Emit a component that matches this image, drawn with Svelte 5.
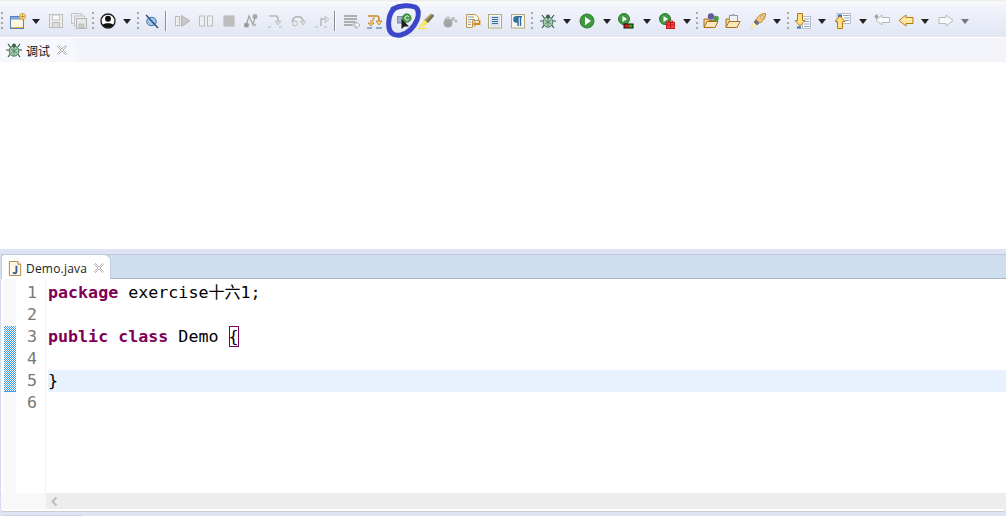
<script>
  const g = '#b9b9b9';
  const icons = {
    newfile: `<rect x="0.5" y="3.5" width="13" height="12" fill="#fdf6dc" stroke="#5b83b5"/><rect x="1" y="4" width="12" height="2.5" fill="#7fa6d6"/><path d="M1 14.5h12" stroke="#e0b050"/><circle cx="12.5" cy="3.5" r="3" fill="#ffe9a0" stroke="#c99a2e"/><path d="M12.5 1.5v4M10.5 3.5h4" stroke="#c98a1e"/>`,
    save: `<rect x="1.5" y="1.5" width="13" height="13" fill="#eee" stroke="#bbb"/><rect x="4.5" y="2" width="7" height="5" fill="#fafafa" stroke="#c4c4c4"/><rect x="4.5" y="9.5" width="7" height="5" fill="#ddd" stroke="#bbb"/>`,
    saveall: `<rect x="0.5" y="0.5" width="10" height="10" fill="#eee" stroke="#c4c4c4"/><rect x="3.5" y="3" width="10" height="10" fill="#eee" stroke="#c4c4c4"/><rect x="5.5" y="5.5" width="10" height="10" fill="#e8e8e8" stroke="#b4b4b4"/><rect x="8" y="11" width="5" height="4" fill="#ccc" stroke="#b4b4b4" stroke-width=".7"/>`,
    user: `<circle cx="8" cy="8" r="7" fill="#fff" stroke="#222" stroke-width="1.4"/><circle cx="8" cy="5.8" r="3" fill="#111"/><path d="M2.6 12.2C3.6 9.6 12.4 9.6 13.4 12.2 11 15.4 5 15.4 2.6 12.2Z" fill="#111"/>`,
    skip: `<ellipse cx="7.5" cy="8.5" rx="4.8" ry="4.2" fill="#a9c6e2" stroke="#3e6ea3"/><path d="M2 2 14 15" stroke="#1f4d84" stroke-width="1.4"/>`,
    resume: `<rect x="0.5" y="3.5" width="4" height="9" fill="#eee" stroke="#bbb"/><path d="M6.5 2.5 15 8l-8.5 5.5Z" fill="#c8c8c8" stroke="#b4b4b4"/>`,
    suspend: `<rect x="1.5" y="3" width="5" height="10" fill="#f0f0f0" stroke="#bbb"/><rect x="9.5" y="3" width="5" height="10" fill="#f0f0f0" stroke="#bbb"/>`,
    stop: `<rect x="2.5" y="2.5" width="11" height="11" rx="1" fill="#bdbdbd" stroke="#cfcfcf"/>`,
    disc: `<circle cx="3.5" cy="12" r="2.5" fill="#999"/><circle cx="12" cy="3.5" r="2.5" fill="#aaa"/><circle cx="12" cy="12" r="1.2" fill="#bbb"/><path d="M3.5 11 6 3l4 9 2-8" fill="none" stroke="#a4a4a4" stroke-width="1.2"/>`,
    into: `<path d="M2 3h7c2 0 2 2 2 3v3" fill="none" stroke="${g}" stroke-width="1.6"/><path d="M8 8h6l-3 4Z" fill="#d8d8d8" stroke="${g}" stroke-width=".7"/><path d="M1 14h3M12 14h3" stroke="${g}" stroke-width="1.2"/>`,
    over: `<path d="M2.5 9C2 2 13 2 13 8" fill="none" stroke="${g}" stroke-width="1.7"/><path d="M10 8h6l-3 4Z" fill="#ddd" stroke="${g}" stroke-width=".7"/><circle cx="5" cy="10.5" r="2.4" fill="#eee" stroke="${g}"/>`,
    ret: `<path d="M7 13V6h5" fill="none" stroke="${g}" stroke-width="1.6"/><path d="M11 3l4 3.5-4 3.5Z" fill="#ddd" stroke="${g}" stroke-width=".7"/><path d="M1 14h3M10 14h3" stroke="${g}" stroke-width="1.2"/>`,
    filter: `<path d="M0 3h13M0 6h13M0 9h11M0 12h8" stroke="#999" stroke-width="1.5"/><path d="M9 11h3V8.5l4 3.500-4 3.500V13H9Z" fill="#fff" stroke="#aaa"/>`,
    drop: `<path d="M1 3h9c2 0 2 1 2 3v3" fill="none" stroke="#c98a1e" stroke-width="1.6"/><path d="M3 8h3V5h2" fill="none" stroke="#c98a1e"/><path d="M9 8h6l-3 4Z" fill="#fbdc8c" stroke="#b87a10" stroke-width=".8"/><path d="M1 10l3 3 3-3Z" fill="#fbdc8c" stroke="#b87a10" stroke-width=".8"/><path d="M0 15h5M9 15h6" stroke="#2c6ca8" stroke-width="1.2"/>`,
    sync: `<rect x="1.500" y="3.500" width="6.500" height="6.500" fill="#a3b1c4" stroke="#7d8ea6"/><path d="M5.500 5.500 V16 L8.500 13.500 H13 Z" fill="#1e1e1e"/><circle cx="10.800" cy="5" r="4.300" fill="#3f9c45" stroke="#246f2a" stroke-width=".6"/><path d="M12.800 3.800A2.100 2.100 0 1 0 12.800 6.300" fill="none" stroke="#fff" stroke-width="1"/>`,
    pen: `<path d="M13 0.500 16 3 10 10 6 7Z" fill="#a99a60"/><path d="M15 1l1 2-6 7-2-2Z" fill="#77735a"/><path d="M6 7l4 3-2.500 2.500L0 15.500Z" fill="#f8e860"/><path d="M0 15.500h9" stroke="#f0dc50" stroke-width="1.200"/>`,
    mark: `<circle cx="6" cy="10" r="4.500" fill="#a4a4a4"/><circle cx="11" cy="6" r="2" fill="#bbb"/><circle cx="14" cy="8" r="1.500" fill="#bbb"/><path d="M3 6.500C5 3 7 4 8 5" fill="none" stroke="#aaa"/>`,
    block: `<path d="M1.500 1.500h9l3 3v3h-6v7h-6Z" fill="#fff6dc" stroke="#b79a5a"/><path d="M3 4h6M3 6.500h7M3 9h3M3 11.500h3" stroke="#8aa2bd"/><path d="M14.500 7v4H9.500" fill="none" stroke="#d18c16" stroke-width="1.800"/><path d="M10 8.500v5L7.500 11Z" fill="#f2b93e" stroke="#b87a10" stroke-width=".5"/>`,
    list: `<rect x="1.500" y="1.500" width="13" height="13.500" fill="#f7f7f4" stroke="#b5a878"/><rect x="3" y="3" width="10" height="10.500" fill="#d7e2f0"/><path d="M5 4.500h6M5 6.500h6M5 8.500h6M5 10.500h6" stroke="#3a6ba4"/>`,
    para: `<rect x="1.500" y="1.500" width="13" height="13.500" fill="#f7f7f4" stroke="#b5a878"/><path d="M8 13V4M10.500 13V4M12 3.800H6.500a2.600 2.600 0 0 0 0 5.200H8" fill="none" stroke="#2f6a9e" stroke-width="1.400"/><path d="M6.500 4.500a2 2 0 0 0 0 4H8V4Z" fill="#2f6a9e"/>`,
    bug: `<path d="M2 2l3 4M14 2l-3 4M0 8h3M16 8h-3M2 15l3-4M14 15l-3-4" stroke="#2b5a3a" stroke-width="1.200"/><ellipse cx="8" cy="9" rx="4.800" ry="5.200" fill="#a9cfa5" stroke="#4a7a6a"/><path d="M8 4v10M5 7l6 4M11 7l-6 4" stroke="#587f85" stroke-width=".9"/><circle cx="8" cy="3.500" r="2" fill="#3f5f55"/>`,
    run: `<circle cx="8" cy="8" r="7" fill="#3f9a3f" stroke="#2b7a2f"/><path d="M6 3.800 12 8l-6 4.200Z" fill="#fff"/>`,
    cov: `<circle cx="6" cy="6" r="5.500" fill="#3f9a3f" stroke="#2b7a2f"/><path d="M4.500 3 9 6 4.500 9Z" fill="#fff"/><rect x="5.500" y="10.500" width="10" height="5" fill="#111"/><rect x="6.500" y="11.500" width="4.500" height="3" fill="#d82020"/><rect x="11" y="11.500" width="3.500" height="3" fill="#18b018"/>`,
    ext: `<circle cx="6" cy="6" r="5.500" fill="#3f9a3f" stroke="#2b7a2f"/><path d="M4.500 3 9 6 4.500 9Z" fill="#fff"/><rect x="7.500" y="9.500" width="8.500" height="6" fill="#f0484c" stroke="#c01818"/><path d="M9.500 9.500V8h4.500v1.500M7.500 12h8.500M11.500 10v5" stroke="#c01818" fill="none"/>`,
    openp: `<path d="M1 14V6h4l1 1.500h5" fill="#f4d89a" stroke="#a8701c"/><path d="M1 14.500l3-6h11l-3 6Z" fill="#fbe9bb" stroke="#a8701c"/><circle cx="8" cy="3.500" r="3.200" fill="#6d55a8"/><circle cx="13" cy="5.500" r="2.800" fill="#4a9a4a"/>`,
    opent: `<path d="M1 14V6h3l1-1h7v2" fill="#f4d89a" stroke="#a8701c"/><rect x="4.500" y="2.500" width="8" height="6" fill="#eef2f6" stroke="#8a98a8"/><rect x="6.500" y="1" width="3" height="2" fill="#9aa8b8"/><path d="M1 14.500l3-6h11l-3 6Z" fill="#fbe9bb" stroke="#a8701c"/>`,
    rocket: `<path d="M15.500 .500c.500 4-2.500 8-6 9.500L6 6.500C7.500 3.500 11.500 0 15.500 .500Z" fill="#f0c878" stroke="#c0893a"/><circle cx="11.800" cy="4.200" r="1.400" fill="#fff" stroke="#a97a3a" stroke-width=".7"/><path d="M6 6.500l3.500 3.500-2.500 2.500-3.500-3.500Z" fill="#6f6f6f"/><path d="M3.500 9.500l3 3-5.500 3Z" fill="#fff4b0" stroke="#ecd878" stroke-width=".5"/>`,
    down: `<rect x="7.500" y="3.500" width="8" height="12" fill="#fff" stroke="#9aa6b5" stroke-width=".7"/><path d="M9 6h5.500M9 8.500h5.500M9 11h5.500M9 13.500h5.500" stroke="#8aa2bd"/><path d="M2.500 .500h5v7h2.500l-5 5.500-5-5.500h2.500Z" fill="#fbe08a" stroke="#b87a10"/><rect x="2" y="13.500" width="4" height="2" fill="#3a6ba4"/>`,
    up: `<rect x="2" y="0.500" width="13.500" height="10" fill="#fff" stroke="#9aa6b5" stroke-width=".7"/><rect x="3" y="1.500" width="4" height="2.500" fill="#3a6ba4"/><path d="M8 2.500h6.500M9 5h5.500M10 7.500h4.500" stroke="#8aa2bd"/><path d="M2.500 15.500h5v-7h2.500l-5-5.500-5 5.500h2.500Z" fill="#fbe08a" stroke="#b87a10"/>`,
    backs: `<path d="M15.500 4.500H8V2L2 7l6 5V9.500h7.500Z" fill="#fafafa" stroke="${g}"/><path d="M1 2l3 3M4 2 1 5M2.500 1v5M.500 3.500h4" stroke="#999" stroke-width=".8"/>`,
    back: `<path d="M15 4.500H8V2L1 7.500 8 13v-2.500h7Z" fill="#fde8a4" stroke="#b87a10"/>`,
    fwd: `<path d="M1 4.500h7V2l7 5.500L8 13v-2.500H1Z" fill="#f8f8f8" stroke="${g}"/>`,
    java: `<path d="M1.500 .500h9l3 3v12h-12Z" fill="#fff8e4" stroke="#a88442"/><path d="M10.500 .500v3h3" fill="#eee" stroke="#a88442"/><path d="M9 5v6.500c0 2-3 2-3.500.500" fill="none" stroke="#2f5f9e" stroke-width="2"/>`
  };
  const items = [
    ['grip',2],['newfile',18],['arrow',36],['save',56],['saveall',79],['grip',93],['user',108],['arrow',127],['grip',138],['skip',152],['sep',166],
    ['resume',183],['suspend',206],['stop',229],['disc',251],['into',275],['over',298],['ret',322],['sep',335],
    ['filter',352],['drop',375],['sync',404],['pen',426],['mark',450],['block',473],['list',495],['para',518],['grip',532],
    ['bug',548],['arrow',567],['run',587],['arrow',607],['cov',626],['arrow',647],['ext',667],['arrow',687],['grip',697],
    ['openp',711],['opent',733],['rocket',758],['arrow',777],['grip',788],['down',803],['arrow',822],['up',843],['arrow',863],
    ['backs',882],['back',906],['arrow',925],['fwd',946],['arrowg',965]
  ];
  const wid = (t) => t === 'grip' || t === 'sep' ? 2 : t === 'arrow' || t === 'arrowg' ? 9 : 16;
  const placed = items.map(([type, c], i) => {
    const prev = i ? items[i - 1][1] + wid(items[i - 1][0]) / 2 : 0;
    return { type, gap: Math.round(c - wid(type) / 2 - prev) };
  });
  const lines = [1, 2, 3, 4, 5, 6];
</script>

<div class="page">
  <div class="toolbar">
    {#each placed as it}
      {#if it.type === 'grip'}
        <span class="grip" style:margin-left="{it.gap}px"></span>
      {:else if it.type === 'sep'}
        <span class="sep" style:margin-left="{it.gap}px"></span>
      {:else if it.type === 'arrow' || it.type === 'arrowg'}
        <span class="arrow" class:dim={it.type === 'arrowg'} style:margin-left="{it.gap}px"></span>
      {:else}
        <svg class="ico" viewBox="0 0 16 16" style:margin-left="{it.gap}px">{@html icons[it.type]}</svg>
      {/if}
    {/each}
  </div>

  <section class="debug">
    <div class="tabs top">
      <div class="tab tab-debug">
        <svg class="tabico" viewBox="0 0 16 16">{@html icons.bug}</svg>
        <span class="cjk">调试</span>
        <svg class="close" viewBox="0 0 10 10"><path d="M1.500 .500 5 4 8.500 .500 9.500 1.500 6 5l3.500 3.500-1 1L5 6 1.500 9.500l-1-1L4 5 .500 1.500Z" fill="#fff" stroke="#9a9a9a" stroke-width=".8"/></svg>
      </div>
    </div>
    <div class="debugbody"></div>
  </section>

  <section class="editor">
    <div class="tabs ed">
      <div class="tab tab-ed">
        <svg class="tabico java" viewBox="0 0 16 16">{@html icons.java}</svg>
        <span class="fname">Demo.java</span>
        <svg class="close" viewBox="0 0 10 10"><path d="M1.500 .500 5 4 8.500 .500 9.500 1.500 6 5l3.500 3.500-1 1L5 6 1.500 9.500l-1-1L4 5 .500 1.500Z" fill="#fff" stroke="#9a9a9a" stroke-width=".8"/></svg>
      </div>
    </div>
    <div class="edbody">
      <div class="ruler"><div class="marker"></div></div>
      <div class="nums">
        {#each lines as n}<div class="num">{n}</div>{/each}
      </div>
      <div class="code">
        <div class="ln"><b>package</b> exercise<span class="han">十六</span>1;</div>
        <div class="ln"></div>
        <div class="ln"><b>public</b> <b>class</b> Demo <span class="brace">{'{'}</span></div>
        <div class="ln"></div>
        <div class="ln cur">{'}'}</div>
        <div class="ln"></div>
      </div>
    </div>
    <div class="hbar">
      <div class="corner"></div>
      <div class="track">
        <svg class="left" viewBox="0 0 7 9"><path d="M5.500 .500 1.500 4.500l4 4" fill="none" stroke="#bcbcbc" stroke-width="2"/></svg>
      </div>
    </div>
  </section>
  <div class="foot"><span class="stub"></span></div>

  <svg class="circle" viewBox="385 0 40 40">
    <path d="M394 9C389 13 388 22 389 28c1 6 6 8 12 7 7-2 13-8 16-15 2-5 2-11-2-13-5-2-15-2-22 2" fill="none" stroke="#3b46c8" stroke-width="5" stroke-linecap="round"/>
  </svg>
</div>

<style>
  :global(body) { margin: 0; background: #fff; }
  .page { width: 1006px; height: 516px; position: relative; overflow: hidden; background: #dfe4f4; display: flex; flex-direction: column; }
  .toolbar { height: 34px; margin-top: 3px; flex: none; display: flex; align-items: center; background: linear-gradient(#f4f6fc, #e1e6f4); box-shadow: 0 -1px 0 #fff, 0 -3px 0 #f0f0f0; box-sizing: border-box; padding-top: 1px; }
  .ico { width: 16px; height: 16px; flex: none; display: block; }
  .grip { width: 2px; height: 18px; flex: none; background: repeating-linear-gradient(#a8a8a8 0 2px, transparent 2px 5px); }
  .sep { width: 2px; height: 20px; flex: none; background: linear-gradient(90deg, #8d8d8d 1px, #fff 1px); }
  .arrow { width: 0; height: 0; flex: none; border-left: 4.500px solid transparent; border-right: 4.500px solid transparent; border-top: 5px solid #222; margin-top: 1px; }
  .arrow.dim { border-top-color: #777; }

  .debug { flex: none; height: 211px; display: flex; flex-direction: column; background: #fff; border-top: 1px solid #fff; border-radius: 0 0 4px 4px; }
  .tabs { flex: none; display: flex; align-items: flex-end; }
  .tabs.top { height: 24px; background: #f3f5fb; }
  .tab { display: flex; align-items: center; box-sizing: border-box; }
  .tab-debug { width: 75px; height: 24px; padding: 0 0 0 6px; background: #f7f8fd; border-radius: 0 9px 0 0; }
  .tabico { width: 16px; height: 16px; flex: none; }
  .cjk { font: 12px "Noto Sans CJK SC", sans-serif; color: #111; margin-left: 4px; }
  .close { width: 10px; height: 10px; flex: none; margin-left: 7px; }
  .debugbody { flex: 1; background: #fff; }

  .editor { flex: none; margin-top: 5px; height: 258px; display: flex; flex-direction: column; background: #fff; border-left: 1px solid #d5dcee; border-radius: 4px; border-bottom: 1px solid #c9cbd4; box-sizing: border-box; }
  .tabs.ed { height: 25px; background: #cfdeee; border-top: 1px solid #bcc8dc; border-bottom: 1px solid #a9b4c4; box-sizing: border-box; }
  .tab-ed { width: 110px; height: 25px; margin-bottom: -1px; padding: 2px 0 0 6px; background: #fff; border: 1px solid #c0cbdc; border-bottom: 0; border-radius: 4px 7px 0 0; }
  .java { width: 15px; height: 15px; }
  .fname { font: 12px "Open Sans", sans-serif; color: #222; margin-left: 3px; letter-spacing: .2px; }
  .tab-ed .close { margin-left: 7px; }

  .edbody { flex: 1; display: flex; min-height: 0; font: 16.67px/22px "DejaVu Sans Mono", monospace; color: #000; }
  .ruler { width: 12px; flex: none; background: #f8f8f8; padding-top: 47px; margin-left: 3px; box-sizing: border-box; }
  .marker { height: 66px; box-sizing: border-box; border-bottom: 1px solid #3f9bf0; background-image: repeating-conic-gradient(#3f9bf0 0 25%, #fff 0 50%); background-size: 2px 2px; }
  .nums { width: 30px; flex: none; padding: 3px 0 0 11px; box-sizing: border-box; border-right: 1px solid #f2f2f2; color: #787878; }
  .num { height: 22px; }
  .code { flex: 1; padding: 3px 0 0 2px; min-width: 0; }
  .ln { height: 22px; white-space: pre; }
  .ln b { color: #7f0055; font-weight: 700; }
  .han { font-family: "Noto Sans CJK SC", sans-serif; font-size: 16px; line-height: 0; }
  .brace { outline: 1px solid #7f0055; outline-offset: -1px; display: inline-block; height: 21px; }
  .cur { background: #e8f2fe; }

  .hbar { flex: none; height: 18px; display: flex; padding-bottom: 2px; box-sizing: border-box; }
  .corner { width: 45px; background: #f8f8f8; }
  .track { flex: 1; background: #ededed; display: flex; align-items: center; padding-left: 5px; }
  .left { width: 7px; height: 9px; }
  .foot { flex: 1; background: #dfe4f4; display: flex; align-items: flex-end; padding-left: 5px; }
  .stub { width: 77px; height: 1px; background: #c8d0e4; }
  .circle { position: absolute; left: 385px; top: 0; width: 40px; height: 40px; }
</style>
